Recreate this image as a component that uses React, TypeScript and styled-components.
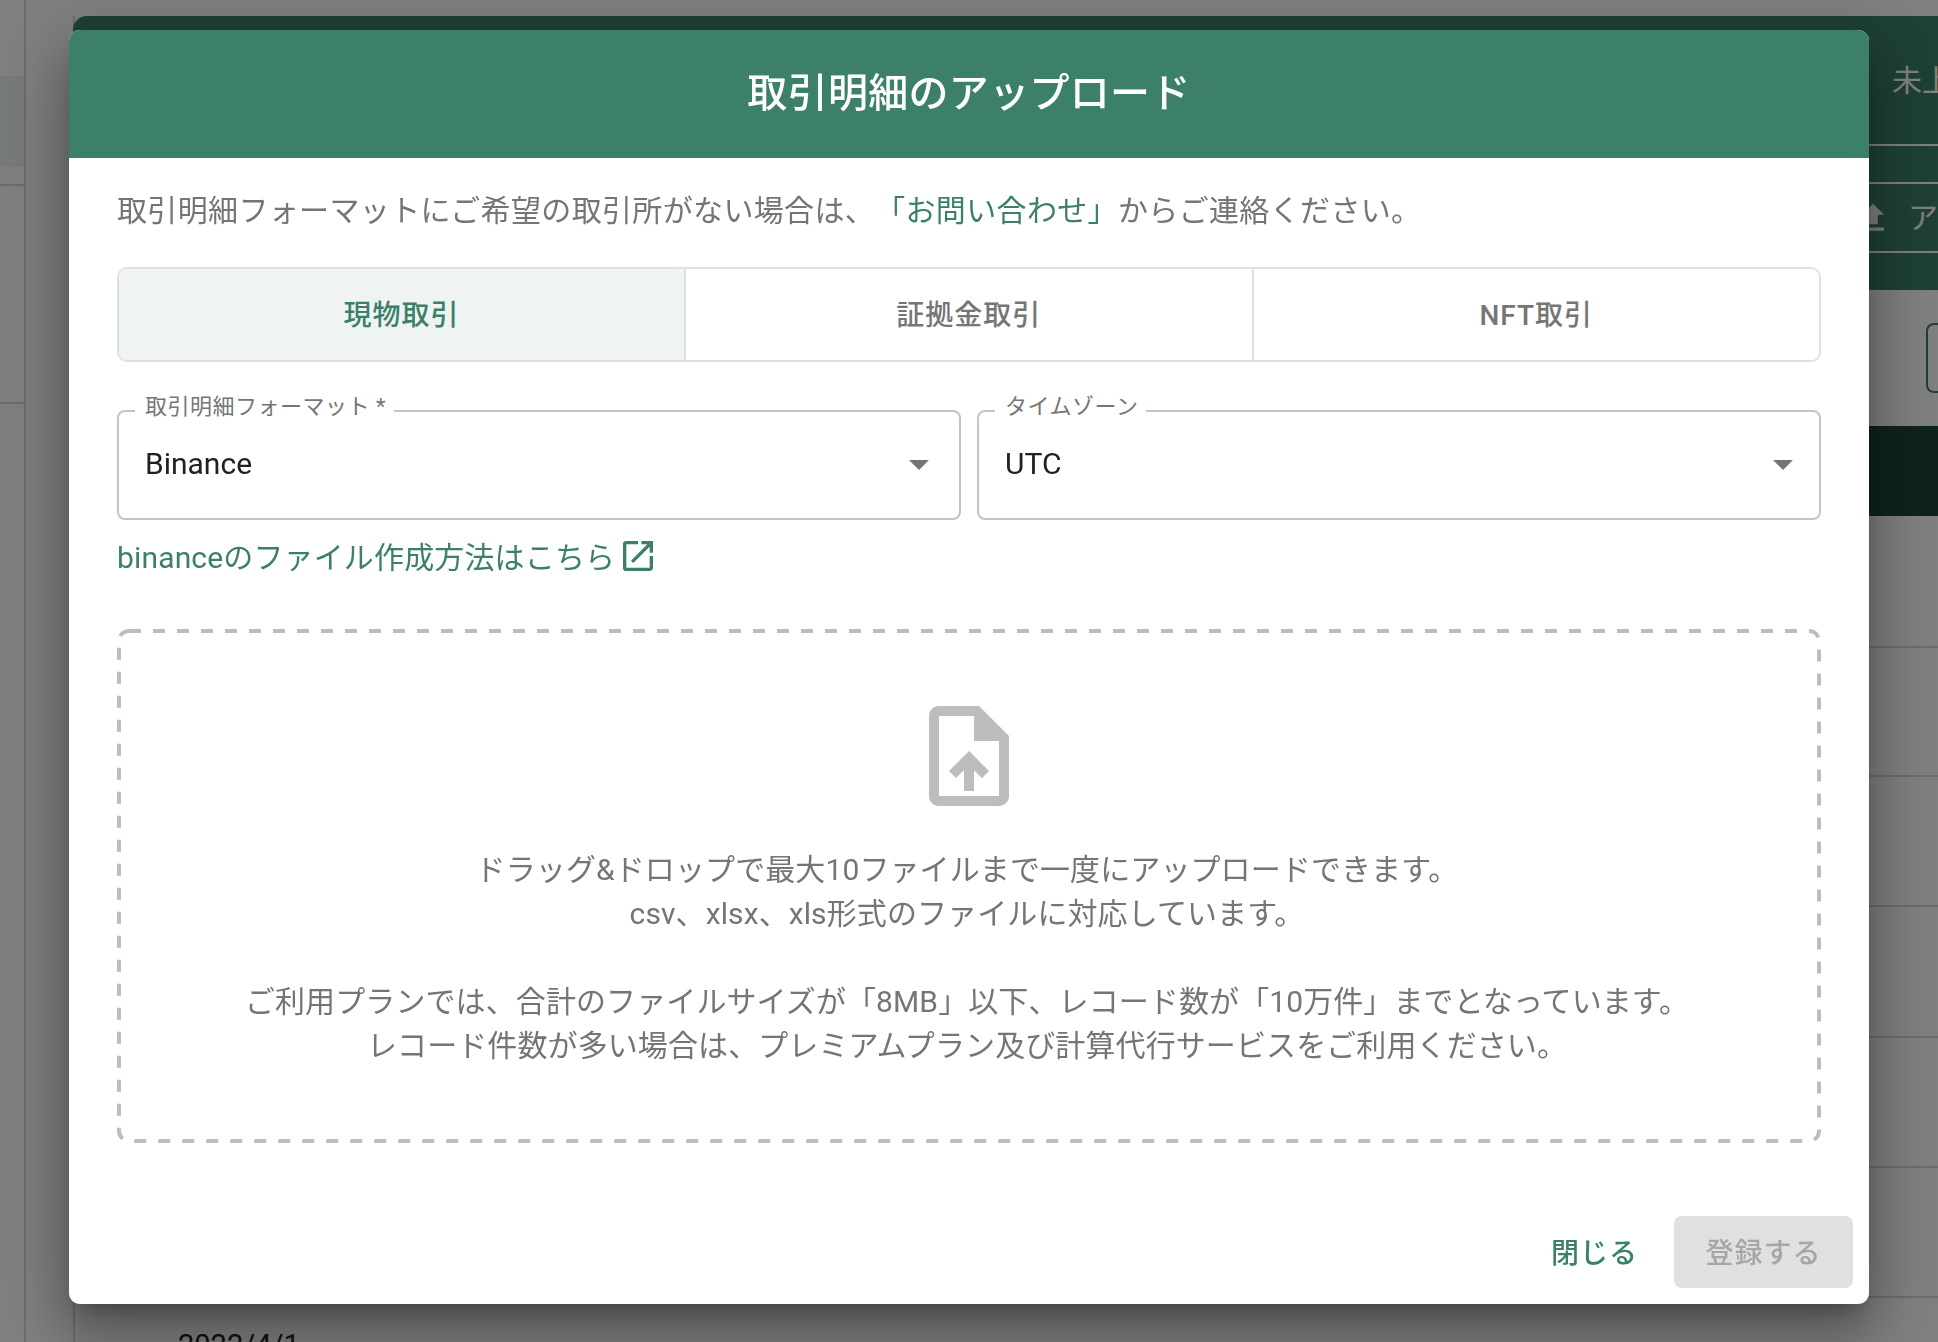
import styled, { createGlobalStyle } from 'styled-components';
import { MdArrowDropDown, MdFileUpload, MdOpenInNew, MdUploadFile } from 'react-icons/md';

const green = '#3d806a';
const grey = '#757575';
const fonts = `Roboto, "Noto Sans CJK JP", sans-serif`;

const GlobalStyle = createGlobalStyle`
  html, body {
    margin: 0;
    height: 100%;
    overflow: hidden;
    background: #fff;
    font-family: ${fonts};
    text-spacing-trim: space-all;
  }
  * {
    box-sizing: border-box;
  }
`;

const Page = styled.div`
  display: flex;
  width: 1938px;
  height: 1342px;
  overflow: hidden;
`;

const Sidebar = styled.aside`
  width: 26px;
  flex: none;
  border-right: 2px solid #d8d8d8;
  display: flex;
  flex-direction: column;
`;

const SideItem = styled.div<{ $h: number; $active?: boolean; $line?: boolean }>`
  height: ${(p) => p.$h}px;
  background: ${(p) => (p.$active ? '#ecf5f1' : 'transparent')};
  border-bottom: ${(p) => (p.$line ? '2px solid #d8d8d8' : 'none')};
`;

const Main = styled.main`
  flex: 1;
  min-width: 0;
  padding: 16px 0 0 47px;
`;

const Card = styled.section`
  height: 100%;
  border-left: 2px solid #d8d8d8;
`;

const CardHeader = styled.header`
  height: 274px;
  margin-left: -2px;
  background: ${green};
  border-top-left-radius: 14px;
  display: flex;
  justify-content: flex-end;
`;

const NavColumn = styled.nav`
  width: 90px;
  color: #fff;
  font-size: 30px;
  white-space: nowrap;
  overflow: hidden;
`;

const NavRow = styled.div<{ $h: number; $line?: boolean }>`
  height: ${(p) => p.$h}px;
  display: flex;
  align-items: center;
  gap: 16px;
  padding-left: 6px;
  border-bottom: ${(p) => (p.$line ? '2px solid #fff' : 'none')};
  svg {
    flex: none;
  }
`;

const NavText = styled.span<{ $indent?: number }>`
  margin-left: ${(p) => p.$indent ?? 0}px;
  margin-bottom: 5px;
`;

const Toolbar = styled.div`
  height: 136px;
  display: flex;
  align-items: center;
  justify-content: flex-end;
`;

const OutlineButton = styled.div`
  width: 12px;
  height: 70px;
  border: 2px solid ${green};
  border-right: none;
  border-radius: 8px 0 0 8px;
`;

const TableHead = styled.div`
  height: 90px;
  background: #1c4638;
`;

const TableRow = styled.div<{ $h: number }>`
  height: ${(p) => p.$h}px;
  border-bottom: 2px solid #d8d8d8;
`;

const LastRow = styled.div`
  padding: 29px 0 0 103px;
  font-size: 29px;
  line-height: 36px;
  color: #212121;
`;

const Overlay = styled.div`
  position: fixed;
  inset: 0;
  background: rgba(0, 0, 0, 0.5);
  display: flex;
  justify-content: center;
  align-items: flex-start;
  padding-top: 30px;
`;

const Dialog = styled.div`
  width: 1800px;
  height: 1274px;
  background: #fff;
  border-radius: 11px;
  overflow: hidden;
  display: flex;
  flex-direction: column;
  box-shadow: 0 15px 21px -10px rgba(0, 0, 0, 0.28), 0 34px 53px 4px rgba(0, 0, 0, 0.2),
    0 13px 64px 11px rgba(0, 0, 0, 0.18);
`;

const DialogTitle = styled.h2`
  margin: 0;
  height: 128px;
  flex: none;
  padding-bottom: 9px;
  background: ${green};
  color: #fff;
  font-size: 40px;
  font-weight: 500;
  letter-spacing: 0.3px;
  display: flex;
  align-items: center;
  justify-content: center;
`;

const DialogBody = styled.div`
  flex: 1;
  padding: 32px 48px 0;
`;

const Intro = styled.p`
  margin: 0;
  font-size: 30px;
  line-height: 42px;
  letter-spacing: 0.35px;
  color: ${grey};
  white-space: nowrap;
`;

const InlineLink = styled.a`
  color: ${green};
  text-decoration: none;
`;

const Tabs = styled.div`
  margin-top: 35px;
  height: 95px;
  display: grid;
  grid-template-columns: 565px 1fr 1fr;
  border: 2px solid #e0e0e0;
  border-radius: 10px;
  overflow: hidden;
`;

const Tab = styled.button<{ $active?: boolean }>`
  border: none;
  border-left: 2px solid #e0e0e0;
  background: ${(p) => (p.$active ? '#eff3f2' : '#fff')};
  color: ${(p) => (p.$active ? green : grey)};
  font-family: ${fonts};
  font-size: 28px;
  font-weight: 500;
  letter-spacing: 1px;
  padding: 0 0 4px;
  &:first-child {
    border-left: none;
  }
`;

const Selects = styled.div`
  margin-top: 48px;
  display: grid;
  grid-template-columns: 1fr 1fr;
  gap: 16px;
`;

const SelectBox = styled.div<{ $arrowInset: number }>`
  position: relative;
  height: 110px;
  border: 2px solid #c4c4c4;
  border-radius: 8px;
  display: flex;
  align-items: center;
  justify-content: space-between;
  padding: 0 ${(p) => p.$arrowInset}px 2px 26px;
  color: ${grey};
`;

const SelectLabel = styled.label`
  position: absolute;
  left: 16px;
  top: -21px;
  padding: 0 8px 0 10px;
  background: #fff;
  font-size: 22px;
  line-height: 32px;
  letter-spacing: 0.5px;
  color: ${grey};
  white-space: nowrap;
`;

const SelectValue = styled.span`
  font-size: 30px;
  color: #212121;
  margin-bottom: 2px;
`;

const GuideLink = styled.a`
  margin-top: 13px;
  height: 44px;
  display: flex;
  align-items: center;
  color: ${green};
  font-size: 30px;
  letter-spacing: 0.15px;
  text-decoration: none;
  svg {
    margin: 2px 0 0 3px;
  }
`;

const DropZone = styled.div`
  position: relative;
  margin-top: 52px;
  height: 514px;
  padding-top: 67px;
  display: flex;
  flex-direction: column;
  align-items: center;
  color: #bdbdbd;
`;

const DashedOutline = styled.svg`
  position: absolute;
  inset: 0;
  width: 100%;
  height: 100%;
  rect {
    fill: none;
    stroke: #bdbdbd;
    stroke-width: 4;
    stroke-dasharray: 12 12;
  }
`;

const DropText = styled.p`
  margin: 32px 0 0;
  padding-right: 4px;
  font-size: 30px;
  line-height: 44px;
  letter-spacing: 0.1px;
  color: ${grey};
  text-align: center;
  white-space: nowrap;
`;

const DialogActions = styled.footer`
  flex: none;
  display: flex;
  justify-content: flex-end;
  align-items: center;
  gap: 20px;
  padding: 0 16px 16px;
`;

const TextButton = styled.button`
  border: none;
  background: none;
  height: 72px;
  padding: 0 16px 3px;
  color: ${green};
  font-family: ${fonts};
  font-size: 28px;
  font-weight: 500;
  letter-spacing: 1px;
`;

const SubmitButton = styled.button`
  border: none;
  width: 179px;
  height: 72px;
  padding: 0 0 2px;
  border-radius: 8px;
  background: #e0e0e0;
  color: #a6a6a6;
  font-family: ${fonts};
  font-size: 28px;
  font-weight: 500;
  letter-spacing: 1px;
`;

const rowHeights = [132, 129, 130, 131, 130, 130];

export default function App() {
  return (
    <>
      <GlobalStyle />
      <Page>
        <Sidebar>
          <SideItem $h={76} />
          <SideItem $h={91} $active />
          <SideItem $h={19} $line />
          <SideItem $h={218} $line />
        </Sidebar>
        <Main>
          <Card>
            <CardHeader>
              <NavColumn>
                <NavRow $h={130} $line>
                  <NavText $indent={38}>未上場</NavText>
                </NavRow>
                <NavRow $h={38} $line />
                <NavRow $h={69} $line>
                  <MdFileUpload size={38} />
                  <NavText>アップロード</NavText>
                </NavRow>
              </NavColumn>
            </CardHeader>
            <Toolbar>
              <OutlineButton />
            </Toolbar>
            <TableHead />
            {rowHeights.map((h, i) => (
              <TableRow key={i} $h={h} />
            ))}
            <LastRow>2022/4/1</LastRow>
          </Card>
        </Main>
      </Page>

      <Overlay>
        <Dialog>
          <DialogTitle>取引明細のアップロード</DialogTitle>
          <DialogBody>
            <Intro>
              取引明細フォーマットにご希望の取引所がない場合は、
              <InlineLink href="#">「お問い合わせ」</InlineLink>
              からご連絡ください。
            </Intro>
            <Tabs>
              <Tab $active>現物取引</Tab>
              <Tab>証拠金取引</Tab>
              <Tab>NFT取引</Tab>
            </Tabs>
            <Selects>
              <SelectBox $arrowInset={16}>
                <SelectLabel>取引明細フォーマット *</SelectLabel>
                <SelectValue>Binance</SelectValue>
                <MdArrowDropDown size={48} />
              </SelectBox>
              <SelectBox $arrowInset={12}>
                <SelectLabel>タイムゾーン</SelectLabel>
                <SelectValue>UTC</SelectValue>
                <MdArrowDropDown size={48} />
              </SelectBox>
            </Selects>
            <GuideLink href="#">
              binanceのファイル作成方法はこちら
              <MdOpenInNew size={40} />
            </GuideLink>
            <DropZone>
              <DashedOutline>
                <rect x="2" y="2" width="1700" height="510" rx="10" />
              </DashedOutline>
              <MdUploadFile size={120} />
              <DropText>
                ドラッグ&ドロップで最大10ファイルまで一度にアップロードできます。
                <br />
                csv、xlsx、xls形式のファイルに対応しています。
                <br />
                <br />
                ご利用プランでは、合計のファイルサイズが「8MB」以下、レコード数が「10万件」までとなっています。
                <br />
                レコード件数が多い場合は、プレミアムプラン及び計算代行サービスをご利用ください。
              </DropText>
            </DropZone>
          </DialogBody>
          <DialogActions>
            <TextButton>閉じる</TextButton>
            <SubmitButton disabled>登録する</SubmitButton>
          </DialogActions>
        </Dialog>
      </Overlay>
    </>
  );
}
